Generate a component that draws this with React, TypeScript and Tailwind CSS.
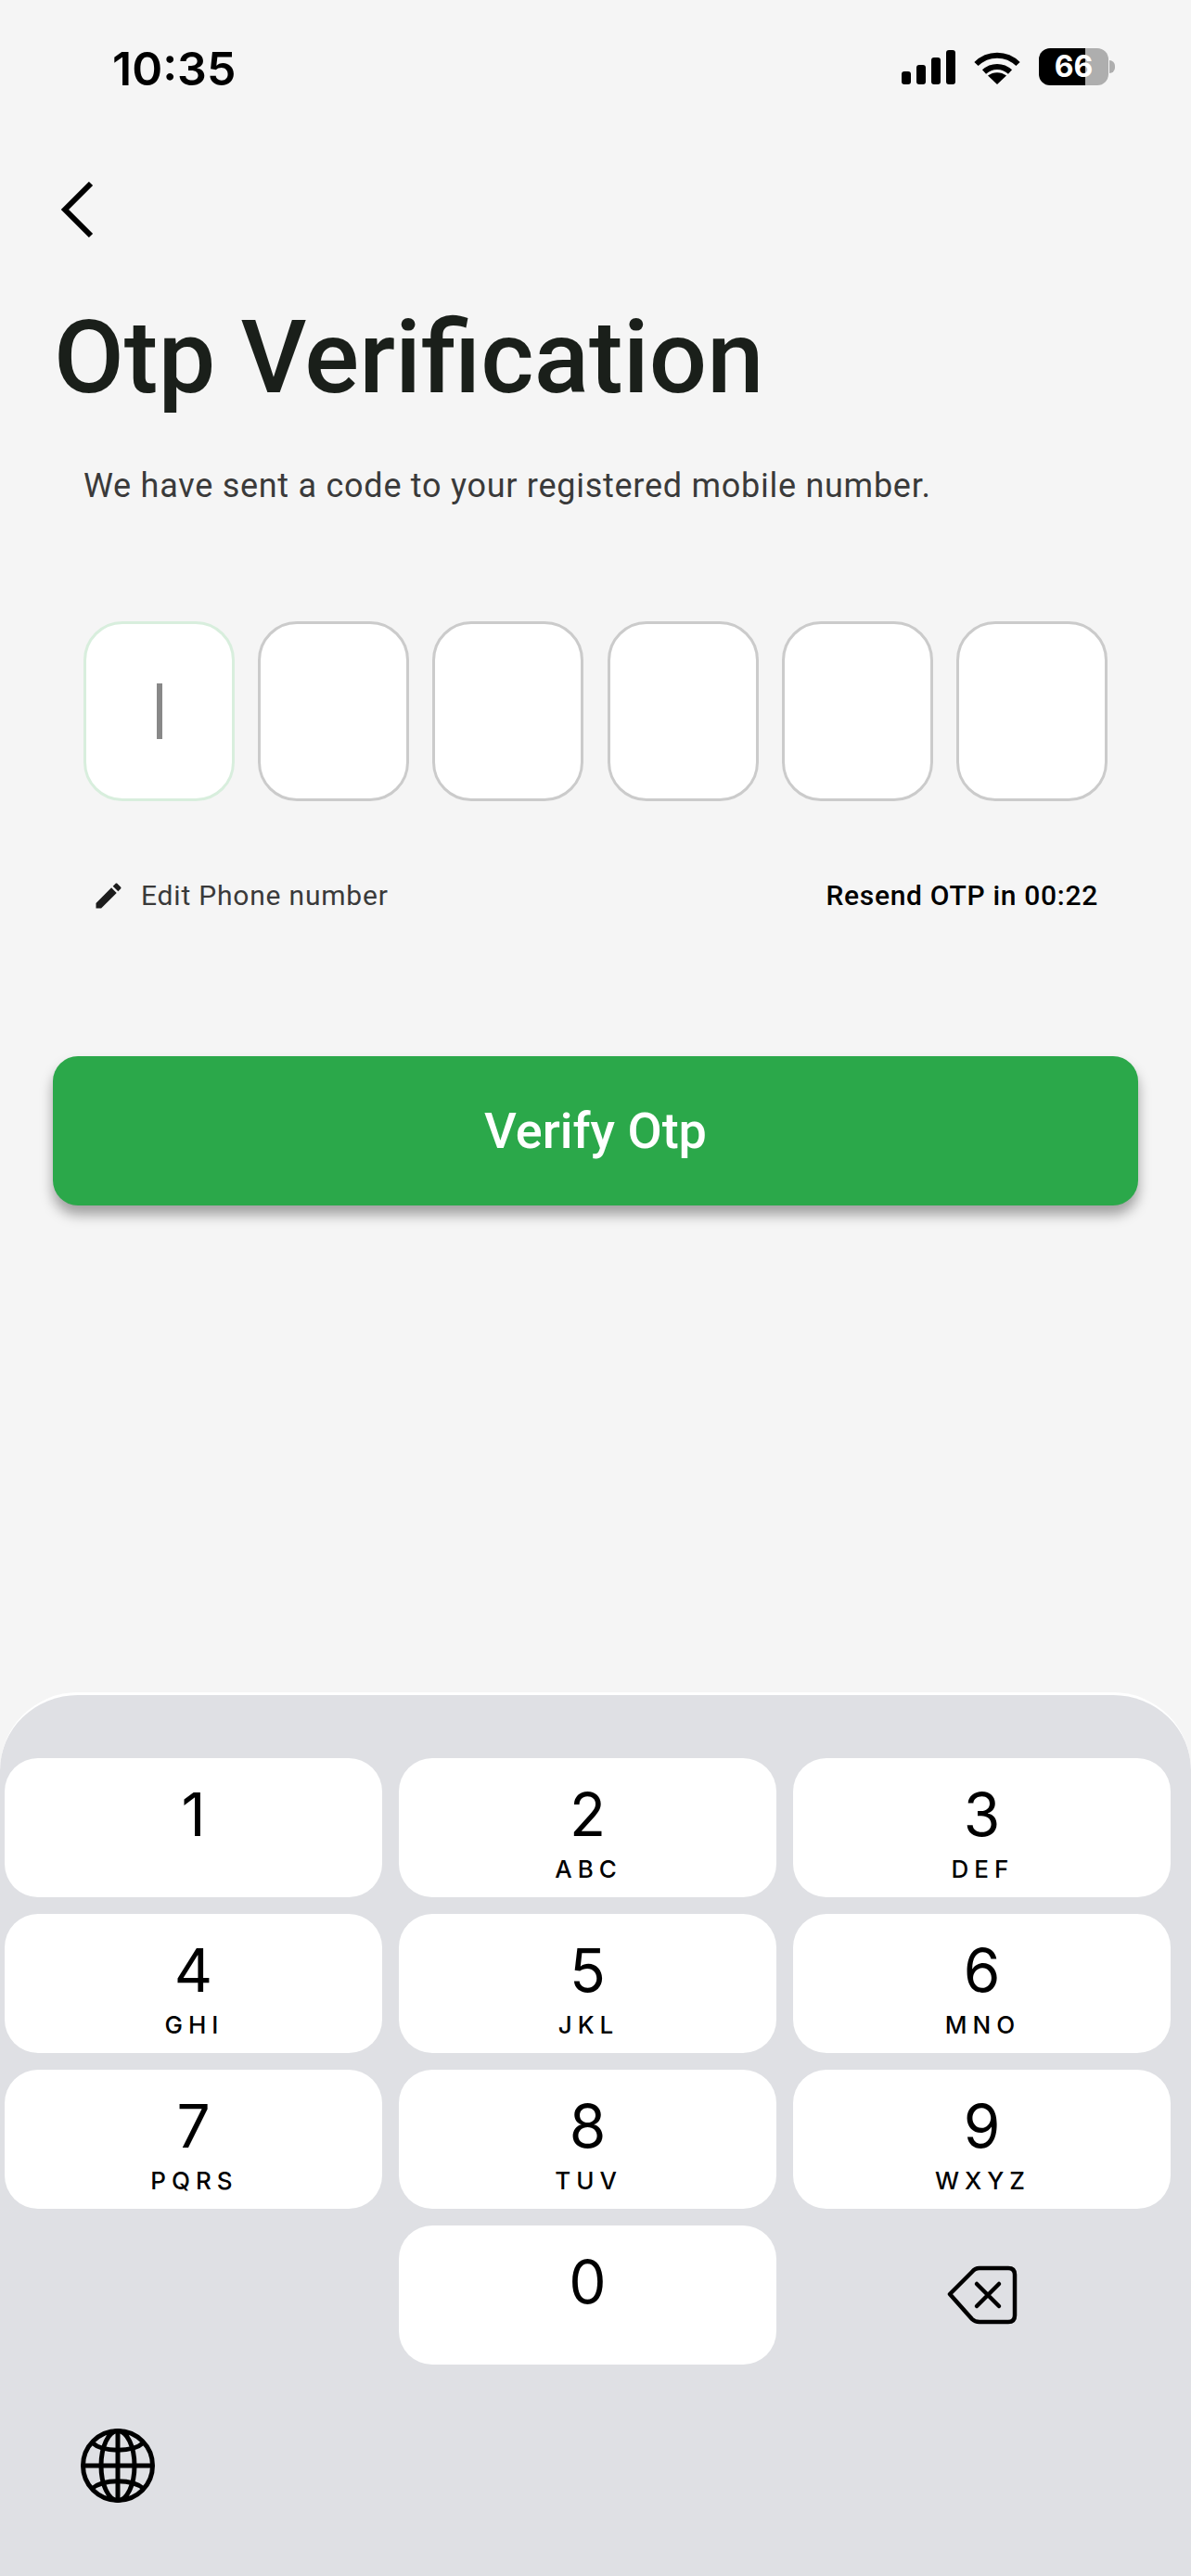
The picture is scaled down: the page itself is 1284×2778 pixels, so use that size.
import React from 'react';

const KEYS = [
  { digit: '1', letters: '' },
  { digit: '2', letters: 'ABC' },
  { digit: '3', letters: 'DEF' },
  { digit: '4', letters: 'GHI' },
  { digit: '5', letters: 'JKL' },
  { digit: '6', letters: 'MNO' },
  { digit: '7', letters: 'PQRS' },
  { digit: '8', letters: 'TUV' },
  { digit: '9', letters: 'WXYZ' },
];

function Key({ digit, letters }: { digit: string; letters: string }) {
  return (
    <div className="flex h-[150px] flex-col items-center rounded-[36px] bg-white pt-[27px] text-black">
      <span className="font-['Inter',sans-serif] text-[64px] leading-[68px]">{digit}</span>
      <span className="mt-[10px] pl-[2px] font-['Inter',sans-serif] text-[26px] font-medium leading-[30px] tracking-[6px]">{letters}</span>
    </div>
  );
}

function StatusBar() {
  return (
    <div className="flex h-[92px] items-center justify-between pl-[121px] pr-[82px] pt-[52px]">
      <span className="pt-[3px] font-['Inter',sans-serif] text-[50px] font-semibold leading-[40px] text-black">10:35</span>
      <div className="flex items-center gap-[20px]">
        <div className="flex items-end gap-[6px]">
          <div className="h-[14px] w-[10px] rounded-[3px] bg-black" />
          <div className="h-[21px] w-[10px] rounded-[3px] bg-black" />
          <div className="h-[29px] w-[10px] rounded-[3px] bg-black" />
          <div className="h-[37px] w-[10px] rounded-[3px] bg-black" />
        </div>
        <svg width="50" height="37" viewBox="0 0 50 37" fill="none" stroke="black" strokeWidth="6">
          <path d="M2.5 15 C15 2.5 35 2.5 47.5 15" />
          <path d="M11 23.5 C19 16 31 16 39 23.5" />
          <path d="M25 37 L15 27.5 C21 23 29 23 35 27.5 Z" fill="black" stroke="none" />
        </svg>
        <div className="flex items-center">
          <div className="flex h-[40px] w-[75px] items-center justify-center rounded-[12px] bg-[linear-gradient(90deg,#000_67%,#aeaeae_67%)]">
            <span className="font-['Inter',sans-serif] text-[32px] font-bold leading-[40px] text-white">66</span>
          </div>
          <div className="ml-[1px] h-[14px] w-[6px] rounded-r-[6px] bg-[#aeaeae]" />
        </div>
      </div>
    </div>
  );
}

export default function App() {
  return (
    <div className="flex h-[2778px] w-[1284px] flex-col overflow-hidden bg-[#f5f5f5] font-['Roboto',sans-serif]">
      <StatusBar />

      <svg className="ml-[65px] mt-[104px]" width="38" height="60" viewBox="0 0 38 60" fill="none" stroke="black" strokeWidth="6">
        <path d="M33 2 L5 30 L33 58" />
      </svg>

      <h1 className="ml-[58px] mt-[70px] text-[110px] font-medium leading-[120px] text-[#1a1f1a]">Otp Verification</h1>

      <p className="ml-[90px] mt-[56px] text-[36px] leading-[44px] tracking-[0.73px] text-[#3a3a3a]">
        We have sent a code to your registered mobile number.
      </p>

      <div className="ml-[90px] mt-[124px] flex gap-[25.2px]">
        <div className="flex h-[194px] w-[163px] items-center justify-center rounded-[42px] border-[3px] border-[#d8eedd] bg-white">
          <div className="h-[60px] w-[6px] bg-[#888]" />
        </div>
        {[0, 1, 2, 3, 4].map(i => (
          <div key={i} className="h-[194px] w-[163px] rounded-[42px] border-[3px] border-[#cbcbcb] bg-white" />
        ))}
      </div>

      <div className="ml-[99px] mr-[100px] mt-[84px] flex items-center justify-between">
        <div className="flex items-center gap-[17px]">
          <svg width="36" height="36" viewBox="0 0 24 24" fill="#1c1c1c">
            <path d="M3 17.25V21h3.75L17.81 9.94l-3.75-3.75L3 17.25zM20.71 7.04c.39-.39.39-1.02 0-1.41l-2.34-2.34c-.39-.39-1.02-.39-1.41 0l-1.83 1.83 3.75 3.75 1.83-1.83z" />
          </svg>
          <span className="text-[30px] leading-[36px] tracking-[0.8px] text-[#3a3a3a]">Edit Phone number</span>
        </div>
        <span className="text-[30px] font-medium leading-[36px] tracking-[0.7px] text-black">Resend OTP in 00:22</span>
      </div>

      <button className="ml-[57px] mt-[155px] flex h-[161px] w-[1170px] items-center justify-center rounded-[27px] bg-[#2ba84a] text-[54px] font-medium text-white shadow-[0_10px_14px_rgba(0,0,0,0.35)]">
        Verify Otp
      </button>

      <div className="mt-auto h-[953px] rounded-t-[84px] border-t-[3px] border-white bg-[#dfe0e4] pl-[5px] pr-[22px] pt-[68px]">
        <div className="grid grid-cols-3 gap-[18px]">
          {KEYS.map(k => (
            <Key key={k.digit} digit={k.digit} letters={k.letters} />
          ))}
          <div />
          <Key digit="0" letters="" />
          <div className="flex items-center justify-center">
            <svg width="76" height="64" viewBox="0 0 76 64" fill="none" stroke="black" strokeWidth="4.5" strokeLinecap="round" strokeLinejoin="round">
              <path d="M3 31 L27 7 Q30 3 35 3 H66 Q73 3 73 10 V54 Q73 61 66 61 H35 Q30 61 27 58 Z" />
              <path d="M32 20 L56 44 M56 20 L32 44" />
            </svg>
          </div>
        </div>
        <svg className="ml-[82px] mt-[69px]" width="80" height="80" viewBox="0 0 80 80" fill="none" stroke="black" strokeWidth="5">
          <circle cx="40" cy="40" r="37.5" />
          <ellipse cx="40" cy="40" rx="18" ry="37.5" />
          <path d="M40 2 V78 M2 40 H78" />
          <path d="M12 15 C24 26 56 26 68 15" />
          <path d="M12 65 C24 54 56 54 68 65" />
        </svg>
      </div>
    </div>
  );
}
